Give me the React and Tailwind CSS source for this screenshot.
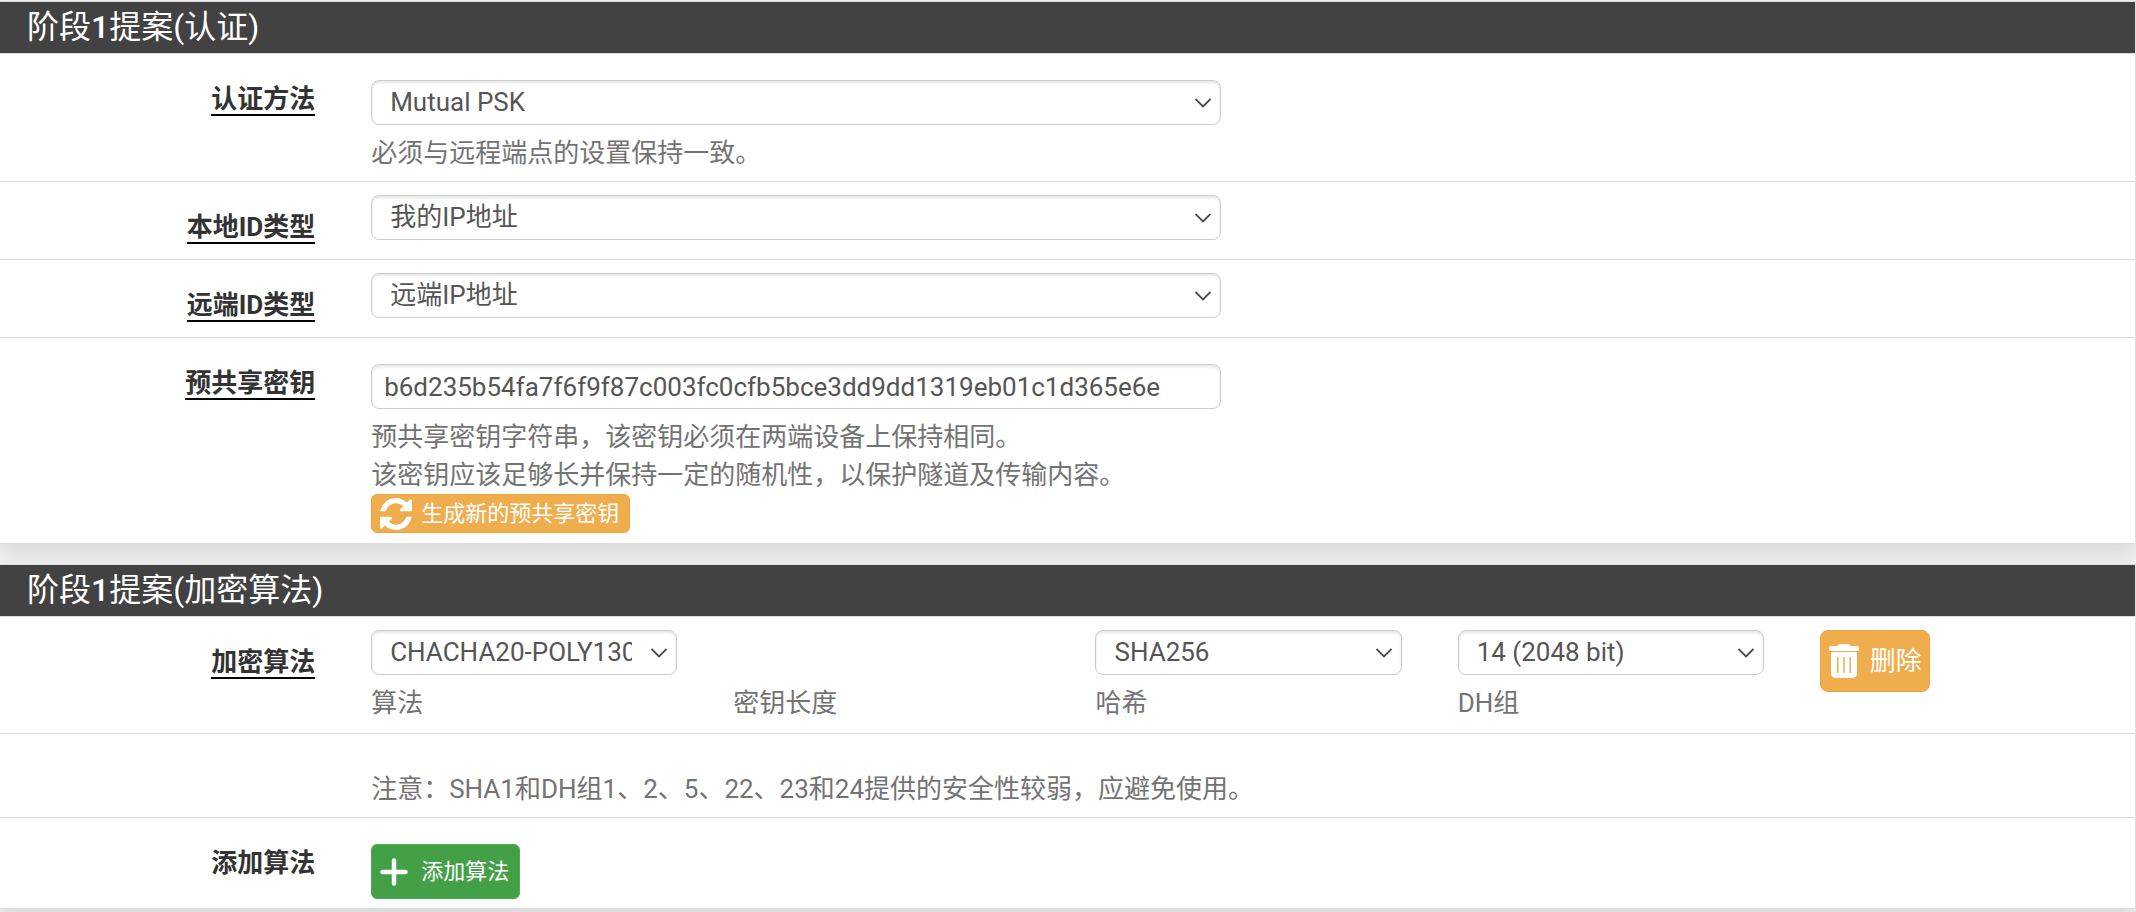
import React, { useState } from 'react';

const LABEL = 'w-1/6 shrink-0 px-7 pt-[26px] text-right font-bold leading-[38px] text-[#333]';
const LABEL_TEXT = 'border-b-2 border-black';
const CONTROL = 'block h-[45px] w-full rounded-lg border border-[#ccc] bg-white text-[#555] outline-none shadow-[inset_0_2px_3px_rgba(0,0,0,0.1)]';
const HELP = 'block leading-[38px] text-[#737373]';

function Panel({ title, children }) {
  return (
    <section className="mr-px bg-white outline outline-[#ddd] shadow-[0_8px_20px_rgba(0,0,0,0.12)]">
      <h2 className="border-b border-[#ddd] bg-[#424242] px-[27px] pt-px pb-px text-[32px] font-normal leading-[49px] text-white">{title}</h2>
      <div className="divide-y divide-[#ddd]">{children}</div>
    </section>
  );
}

function Row({ id, label, underline = true, children }) {
  return (
    <div className="overflow-hidden">
      <div className="-mx-[19px] flex">
        <label htmlFor={id} className={LABEL}>
          <span className={underline ? LABEL_TEXT : ''}>{label}</span>
        </label>
        {children}
      </div>
    </div>
  );
}

function Select({ id, label, options }) {
  const [value, setValue] = useState(options[0]);

  return (
    <div className="relative">
      <select id={id} aria-label={label} value={value} onChange={(e) => setValue(e.target.value)} className={`${CONTROL} appearance-none pl-[18px] pr-11`}>
        {options.map(o => <option key={o} value={o}>{o}</option>)}
      </select>
      <svg viewBox="0 0 16 10" className="pointer-events-none absolute right-2.5 top-[18px] h-[10px] w-4" fill="none" stroke="#4a4a4a" strokeWidth="1.8">
        <path d="M0.500 1l7.500 7.500L15.500 1" />
      </svg>
    </div>
  );
}

function RefreshIcon() {
  return (
    <svg viewBox="0 0 1536 1536" className="h-8 w-8 shrink-0" fill="currentColor">
      <path d="M1511 928q0 5-1 7-64 268-268 434.500T764 1536q-146 0-282.500-55T238 1324l-129 129q-19 19-45 19t-45-19-19-45V960q0-26 19-45t45-19h448q26 0 45 19t19 45-19 45l-137 137q71 66 161 102t187 36q134 0 250-65t186-179q11-17 53-117 8-23 30-23h192q13 0 22.500 9.500t9.500 22.500zm25-800v448q0 26-19 45t-45 19h-448q-26 0-45-19t-19-45 19-45l138-138Q969 256 768 256q-134 0-250 65T332 500q-11 17-53 117-8 23-30 23H50q-13 0-22.500-9.500T18 608v-7q65-268 270-434.500T768 0q146 0 284 55.500T1297 212l130-129q19-19 45-19t45 19 19 45z" />
    </svg>
  );
}

function TrashIcon() {
  return (
    <svg viewBox="0 0 32 36" className="h-9 w-8 shrink-0" fill="currentColor">
      <path d="M10 2.500Q10 1 12 1h8q2 0 2 1.500V3h7q2 0 2 2.500T29 8H3Q1 8 1 5.500T3 3h7z" />
      <path fillRule="evenodd" d="M3 9h26v21q0 5-5 5H8q-5 0-5-5zM9 14v16h1.500V14zm6.200 0v16h1.500V14zm6.300 0v16H23V14z" />
    </svg>
  );
}

function PlusIcon() {
  return (
    <svg viewBox="0 0 28 28" className="h-7 w-7 shrink-0" fill="none" stroke="currentColor" strokeWidth="4.500" strokeLinecap="round">
      <path d="M14 2.500v23M2.500 14h23" />
    </svg>
  );
}

export default function App() {
  const [psk, setPsk] = useState('b6d235b54fa7f6f9f87c003fc0cfb5bce3dd9dd1319eb01c1d365e6e');

  const generateKey = () => {
    const bytes = crypto.getRandomValues(new Uint8Array(28));
    setPsk(Array.from(bytes, b => b.toString(16).padStart(2, '0')).join(''));
  };

  return (
    <main lang="zh-CN" className="min-h-screen space-y-[22px] bg-[#f1f1f1] pt-0.5 font-['Roboto','Noto_Sans_CJK_SC',sans-serif] text-[26px]">
      <Panel title={<>阶段<span className="font-medium">1</span>提案(认证)</>}>
        <Row id="method" label="认证方法">
          <div className="w-5/12 px-7 pb-[9px] pt-[26px]">
            <Select id="method" options={['Mutual PSK', 'Mutual RSA']} />
            <span className={`${HELP} mt-[9px]`}>必须与远程端点的设置保持一致。</span>
          </div>
        </Row>
        <Row id="myid" label="本地ID类型">
          <div className="w-5/12 px-7 pb-[19px] pt-[13px]">
            <Select id="myid" options={['我的IP地址', 'IP地址', '域名']} />
          </div>
        </Row>
        <Row id="peerid" label="远端ID类型">
          <div className="w-5/12 px-7 pb-[19px] pt-[13px]">
            <Select id="peerid" options={['远端IP地址', 'IP地址', '域名']} />
          </div>
        </Row>
        <Row id="psk" label="预共享密钥">
          <div className="w-5/12 px-7 pb-2.5 pt-[26px]">
            <input id="psk" type="text" value={psk} onChange={(e) => setPsk(e.target.value)} className={`${CONTROL} px-3`} />
            <p className={`${HELP} mt-[9px]`}>预共享密钥字符串，该密钥必须在两端设备上保持相同。<br />该密钥应该足够长并保持一定的随机性，以保护隧道及传输内容。</p>
            <button type="button" onClick={generateKey} className="flex h-[39px] items-center gap-[9px] rounded-md border border-[#eea236] bg-[#f0ad4e] pl-2 pr-2.5 text-[22px] text-white">
              <RefreshIcon />生成新的预共享密钥
            </button>
          </div>
        </Row>
      </Panel>

      <Panel title={<>阶段<span className="font-medium">1</span>提案(加密算法)</>}>
        <Row id="algo" label="加密算法">
          <div className="w-1/6 px-7 pb-[11px] pt-[13px]">
            <Select id="algo" options={['CHACHA20-POLY1305', 'AES', 'AES256-GCM']} />
            <span className={`${HELP} mt-[9px]`}>算法</span>
          </div>
          <div className="w-1/6 px-7 pb-[11px] pt-[67px]">
            <span className={HELP}>密钥长度</span>
          </div>
          <div className="w-1/6 px-7 pb-[11px] pt-[13px]">
            <Select label="哈希" options={['SHA256', 'SHA384', 'SHA512']} />
            <span className={`${HELP} mt-[9px]`}>哈希</span>
          </div>
          <div className="w-1/6 px-7 pb-[11px] pt-[13px]">
            <Select label="DH组" options={['14 (2048 bit)', '15 (3072 bit)', '16 (4096 bit)']} />
            <span className={`${HELP} mt-[9px]`}>DH组</span>
          </div>
          <div className="w-1/6 px-7 pt-[13px]">
            <button type="button" className="flex h-[62px] items-center gap-2.5 rounded-lg border border-[#eea236] bg-[#f0ad4e] px-[7px] text-[26px] text-white">
              <TrashIcon />删除
            </button>
          </div>
        </Row>
        <div className="overflow-hidden">
          <div className="-mx-[19px] flex">
            <p className={`${HELP} ml-[16.6667%] px-7 pb-[9px] pt-9`}>注意：SHA1和DH组1、2、5、22、23和24提供的安全性较弱，应避免使用。</p>
          </div>
        </div>
        <Row id="add" label="添加算法" underline={false}>
          <div className="w-5/12 px-7 pb-[9px] pt-[26px]">
            <button id="add" type="button" className="flex h-[55px] items-center gap-[13px] rounded-md border border-[#4cae4c] bg-[#43a047] pl-2 pr-2.5 text-[22px] text-white">
              <PlusIcon />添加算法
            </button>
          </div>
        </Row>
      </Panel>
    </main>
  );
}
